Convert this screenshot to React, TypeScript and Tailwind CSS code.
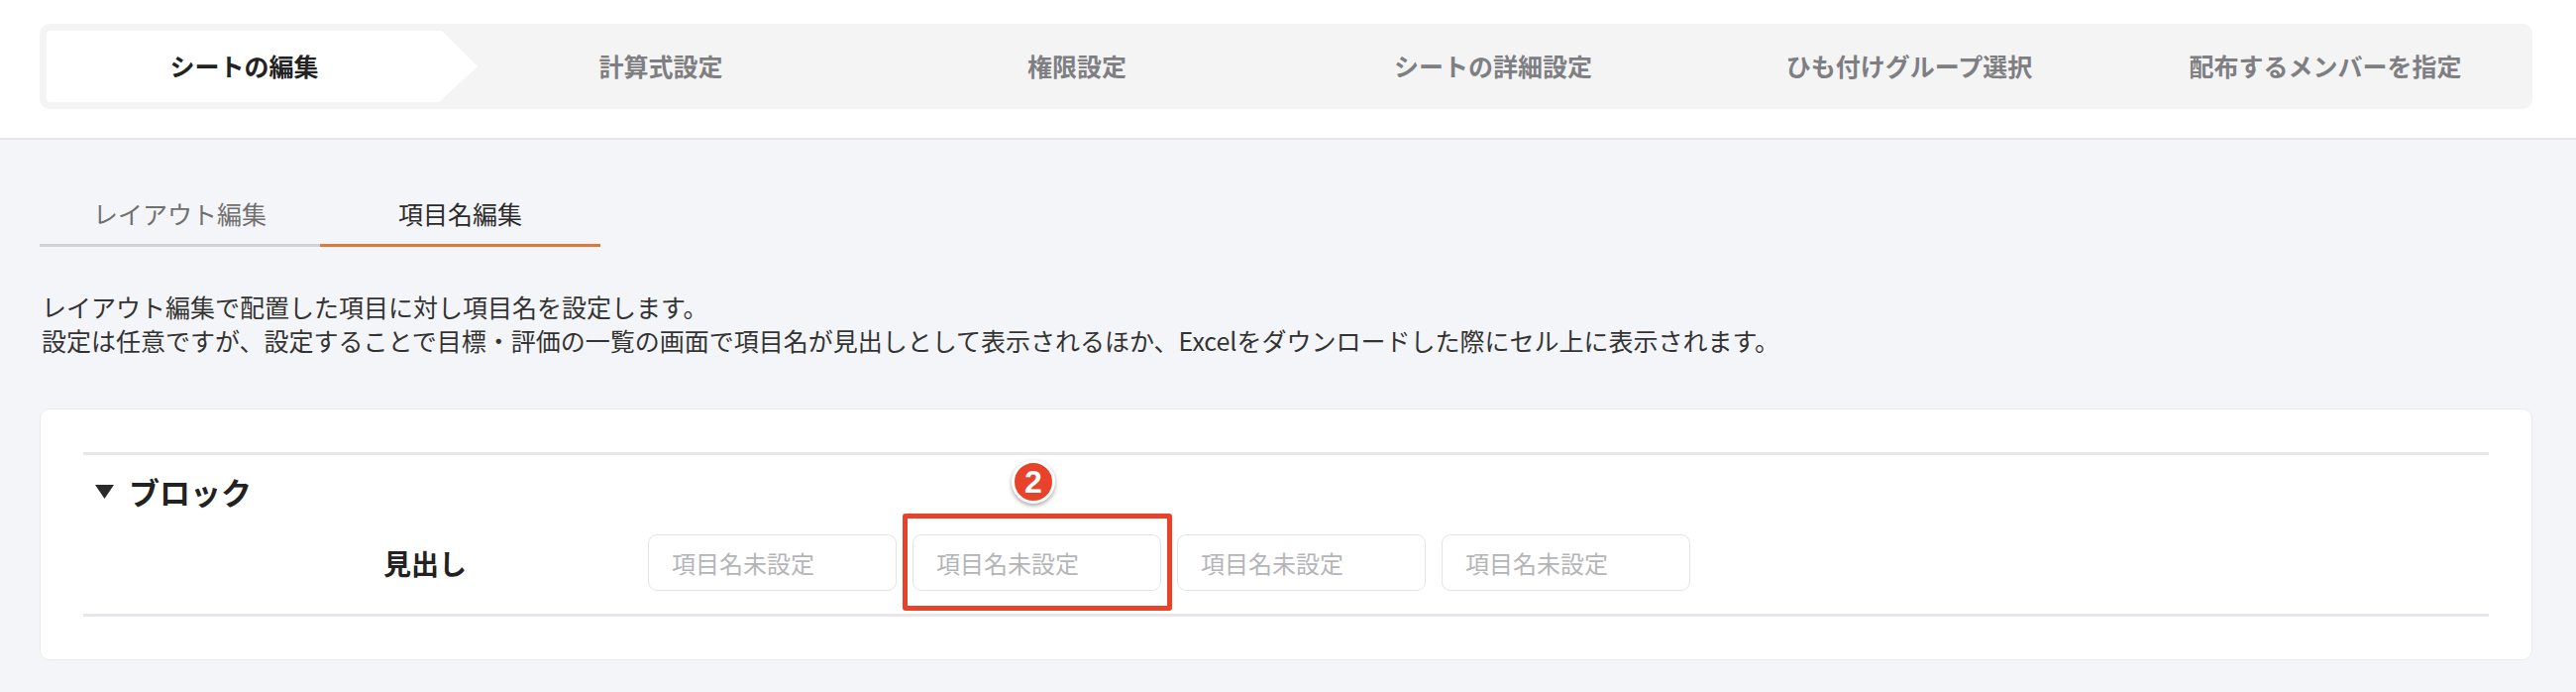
const steps = [
  "シートの編集",
  "計算式設定",
  "権限設定",
  "シートの詳細設定",
  "ひも付けグループ選択",
  "配布するメンバーを指定",
];

function Stepper() {
  return (
    <div className="flex h-[86px] overflow-hidden rounded-[10px] bg-[#f4f4f5] py-[7px] pl-[7px]">
      {steps.map((label, i) =>
        i === 0 ? (
          <div
            key={label}
            className="mr-[-15px] flex h-full w-[435px] shrink-0 items-center rounded-l-[4px] bg-white [clip-path:polygon(0_0,399px_0,435px_50%,396px_100%,0_100%)]"
          >
            <span className="w-[399px] text-center text-[25px] font-bold text-[#222]">
              {label}
            </span>
          </div>
        ) : (
          <div key={label} className="flex h-full w-[420px] shrink-0 items-center">
            <span className="w-[400px] text-center text-[25px] font-bold text-[#7f7f83]">
              {label}
            </span>
          </div>
        )
      )}
    </div>
  );
}

function Tabs() {
  return (
    <div className="mt-[56px] flex">
      <div className="w-[283px] border-b-[3px] border-[#d0d0d5] pb-[13px] text-center text-[25px] leading-[36px] text-[#707070]">
        レイアウト編集
      </div>
      <div className="w-[283px] border-b-[3px] border-[#dd7a3a] pb-[13px] text-center text-[25px] leading-[36px] text-[#2b2b2b]">
        項目名編集
      </div>
    </div>
  );
}

function NameInput({ highlighted = false }: { highlighted?: boolean }) {
  return (
    <div className="relative">
      <input
        readOnly
        placeholder="項目名未設定"
        className="h-[57px] w-[251px] rounded-[9px] border border-[#e3e3e8] bg-white pl-[23px] text-[24px] outline-none placeholder:text-[#b5b5b8]"
      />
      {highlighted && (
        <>
          {/* annotation frame */}
          <div className="pointer-events-none absolute -top-[21px] -right-[11px] -bottom-[20px] -left-[10px] rounded-[3px] border-[5px] border-[#e8432a]" />
          <div className="absolute -top-[75px] left-[100px] flex h-[44px] w-[44px] items-center justify-center rounded-full border-[3px] border-white bg-[#e8432a] font-['Liberation_Sans',sans-serif] text-[32px] leading-none font-bold text-white shadow-[0_2px_4px_rgba(0,0,0,0.35)]">
            2
          </div>
        </>
      )}
    </div>
  );
}

export default function App() {
  return (
    <div className="min-h-screen bg-[#f4f5f8] font-['Noto_Sans_CJK_JP','Noto_Sans',sans-serif]">
      <header className="border-b-2 border-[#e6e6ea] bg-white pt-[24px] pr-[44px] pb-[29px] pl-[40px]">
        <Stepper />
      </header>

      <main className="pr-[44px] pl-[40px]">
        <Tabs />

        <div className="mt-[43px] pl-[2px] text-[25px] leading-[34px] text-[#333]">
          <p>レイアウト編集で配置した項目に対し項目名を設定します。</p>
          <p>
            設定は任意ですが、設定することで目標・評価の一覧の画面で項目名が見出しとして表示されるほか、Excelをダウンロードした際にセル上に表示されます。
          </p>
        </div>

        <section className="mt-[52px] rounded-[10px] border border-[#ebebee] bg-white px-[43px] pt-[43px] pb-[43px]">
          <div className="border-t-[3px] border-[#e6e6eb]" />

          <div className="mt-[15px] flex h-[44px] items-center gap-[15px] pl-[12px]">
            <svg width="19" height="14" viewBox="0 0 19 14">
              <polygon points="0,0 19,0 9.5,14" fill="#2a2a2a" />
            </svg>
            <h2 className="text-[31px] font-bold text-[#222]">ブロック</h2>
          </div>

          <div className="mt-[21px] flex items-center pl-[120px]">
            <div className="w-[450px] text-center text-[28px] font-bold text-[#222]">
              見出し
            </div>
            <div className="flex gap-4">
              <NameInput />
              <NameInput highlighted />
              <NameInput />
              <NameInput />
            </div>
          </div>

          <div className="mt-[23px] border-t-[3px] border-[#e6e6eb]" />
        </section>
      </main>
    </div>
  );
}
